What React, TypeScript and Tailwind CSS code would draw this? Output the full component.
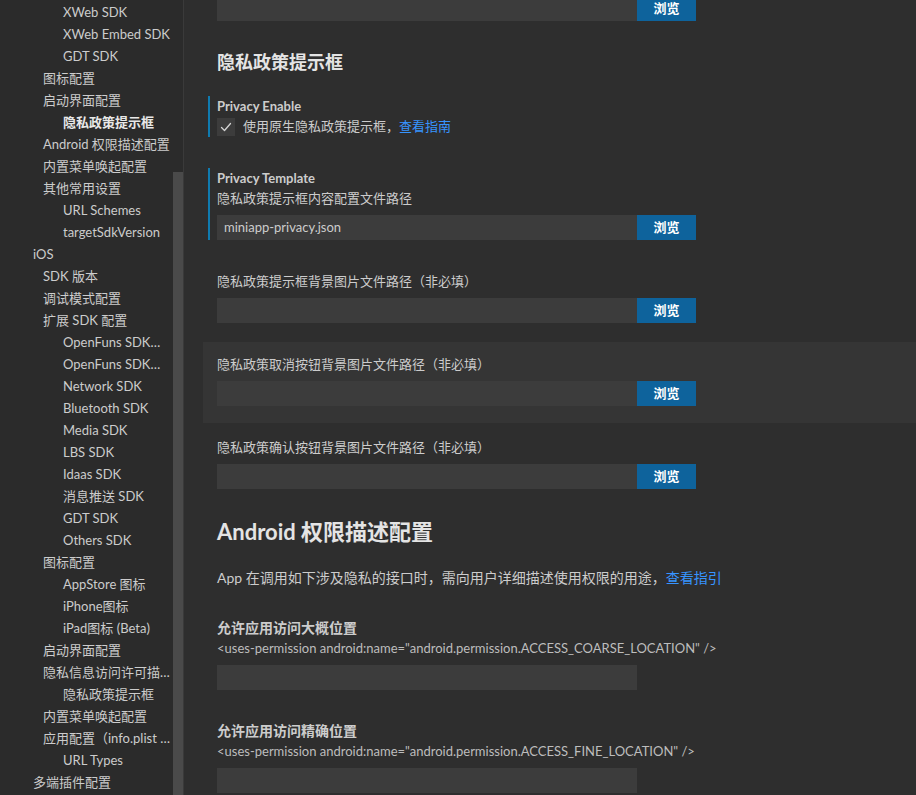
import React from "react";

type NavItem = { label: string; level: 0 | 1 | 2; active?: boolean };

const nav: NavItem[] = [
  { label: "XWeb SDK", level: 2 },
  { label: "XWeb Embed SDK", level: 2 },
  { label: "GDT SDK", level: 2 },
  { label: "图标配置", level: 1 },
  { label: "启动界面配置", level: 1 },
  { label: "隐私政策提示框", level: 2, active: true },
  { label: "Android 权限描述配置", level: 1 },
  { label: "内置菜单唤起配置", level: 1 },
  { label: "其他常用设置", level: 1 },
  { label: "URL Schemes", level: 2 },
  { label: "targetSdkVersion", level: 2 },
  { label: "iOS", level: 0 },
  { label: "SDK 版本", level: 1 },
  { label: "调试模式配置", level: 1 },
  { label: "扩展 SDK 配置", level: 1 },
  { label: "OpenFuns SDK（Account）", level: 2 },
  { label: "OpenFuns SDK（Share）", level: 2 },
  { label: "Network SDK", level: 2 },
  { label: "Bluetooth SDK", level: 2 },
  { label: "Media SDK", level: 2 },
  { label: "LBS SDK", level: 2 },
  { label: "Idaas SDK", level: 2 },
  { label: "消息推送 SDK", level: 2 },
  { label: "GDT SDK", level: 2 },
  { label: "Others SDK", level: 2 },
  { label: "图标配置", level: 1 },
  { label: "AppStore 图标", level: 2 },
  { label: "iPhone图标", level: 2 },
  { label: "iPad图标 (Beta)", level: 2 },
  { label: "启动界面配置", level: 1 },
  { label: "隐私信息访问许可描述", level: 1 },
  { label: "隐私政策提示框", level: 2 },
  { label: "内置菜单唤起配置", level: 1 },
  { label: "应用配置（info.plist 文件）", level: 1 },
  { label: "URL Types", level: 2 },
  { label: "多端插件配置", level: 0 },
];

const indent = { 0: "pl-[33px]", 1: "pl-[43px]", 2: "pl-[63px]" };

function BrowseInput({ value }: { value?: string }) {
  return (
    <div className="flex h-[25px]">
      <div className="w-[420px] bg-[#3c3c3c] pl-[7px] text-[13px] leading-[25px] text-[#cccccc]">{value}</div>
      <button className="w-[59px] bg-[#0e639c] text-[13px] font-semibold text-white">浏览</button>
    </div>
  );
}

function Setting({ focused, hover, children }: { focused?: boolean; hover?: boolean; children: React.ReactNode }) {
  return (
    <div className={`flex pt-[12px] pb-[17px] mb-[2px] ${hover ? "bg-[#353535]" : ""}`}>
      <div className="w-[5px] shrink-0" />
      <div className={`w-[2px] shrink-0 ${focused ? "bg-[#0f7bb0]" : ""}`} />
      <div className="flex-1 min-w-0 pl-[7px]">{children}</div>
    </div>
  );
}

function Label({ children }: { children: React.ReactNode }) {
  return <p className="text-[13px] leading-[20px] font-bold text-[#cccccc]">{children}</p>;
}

export default function App() {
  return (
    <div className="flex h-[795px] w-[916px] overflow-hidden bg-[#2e2e2e] font-['Lato','Noto_Sans_CJK_SC',sans-serif]">
      <aside className="flex w-[184px] shrink-0 border-r border-[#3a3a3a] bg-[#2b2b2b]">
        <div className="flex-1 min-w-0 pt-px">
          {nav.map((n, i) => (
            <div
              key={i}
              className={`h-[22px] truncate pr-[2px] text-[13px] leading-[22px] ${indent[n.level]} ${
                n.active ? "font-bold text-[#e8e8e8]" : "text-[#cccccc]"
              }`}
            >
              {n.label}
            </div>
          ))}
        </div>
        <div className="flex w-[10px] shrink-0 flex-col">
          <div className="h-[172px]" />
          <div className="flex-1 bg-[#4a4a4a]" />
        </div>
      </aside>

      <main className="flex-1 min-w-0 -mt-[4px] pl-[19px]">
        <div className="pb-[19px] pl-[14px]">
          <BrowseInput />
        </div>

        <h2 className="flex h-[44px] items-center pl-[14px] text-[18px] font-bold text-[#e4e4e4]">隐私政策提示框</h2>

        <Setting focused>
          <Label>Privacy Enable</Label>
          <div className="flex h-[21px] items-center gap-[8px]">
            <span className="flex h-[18px] w-[18px] items-center justify-center bg-[#3c3c3c]">
              <svg width="12" height="12" viewBox="0 0 12 12" fill="none">
                <path d="M1.5 6.5l3 3 6-7" stroke="#d4d4d4" strokeWidth="1.3" strokeLinecap="round" strokeLinejoin="round" />
              </svg>
            </span>
            <span className="text-[13px] text-[#cccccc]">
              使用原生隐私政策提示框，<span className="text-[#3794ff]">查看指南</span>
            </span>
          </div>
        </Setting>

        <Setting focused>
          <Label>Privacy Template</Label>
          <p className="text-[13px] leading-[20px] text-[#cccccc]">隐私政策提示框内容配置文件路径</p>
          <div className="mt-[7px]">
            <BrowseInput value="miniapp-privacy.json" />
          </div>
        </Setting>

        <Setting>
          <p className="text-[13px] leading-[20px] text-[#cccccc]">隐私政策提示框背景图片文件路径（非必填）</p>
          <div className="mt-[7px]">
            <BrowseInput />
          </div>
        </Setting>

        <Setting hover>
          <p className="text-[13px] leading-[20px] text-[#cccccc]">隐私政策取消按钮背景图片文件路径（非必填）</p>
          <div className="mt-[7px]">
            <BrowseInput />
          </div>
        </Setting>

        <Setting>
          <p className="text-[13px] leading-[20px] text-[#cccccc]">隐私政策确认按钮背景图片文件路径（非必填）</p>
          <div className="mt-[7px]">
            <BrowseInput />
          </div>
        </Setting>

        <h2 className="flex h-[46px] items-center pl-[14px] text-[22px] font-bold text-[#e4e4e4]">Android 权限描述配置</h2>
        <p className="pl-[14px] pt-[14px] pb-[18px] text-[14px] leading-[20px] text-[#cccccc]">
          App 在调用如下涉及隐私的接口时，需向用户详细描述使用权限的用途，<span className="text-[#3794ff]">查看指引</span>
        </p>

        <Setting>
          <p className="text-[14px] leading-[20px] font-bold text-[#cccccc]">允许应用访问大概位置</p>
          <p className="text-[13px] leading-[20px] text-[#bdbdbd]">
            {'<uses-permission android:name="android.permission.ACCESS_COARSE_LOCATION" />'}
          </p>
          <div className="mt-[7px] h-[25px] w-[420px] bg-[#3c3c3c]" />
        </Setting>

        <Setting>
          <p className="text-[14px] leading-[20px] font-bold text-[#cccccc]">允许应用访问精确位置</p>
          <p className="text-[13px] leading-[20px] text-[#bdbdbd]">
            {'<uses-permission android:name="android.permission.ACCESS_FINE_LOCATION" />'}
          </p>
          <div className="mt-[7px] h-[25px] w-[420px] bg-[#3c3c3c]" />
        </Setting>
      </main>
    </div>
  );
}
